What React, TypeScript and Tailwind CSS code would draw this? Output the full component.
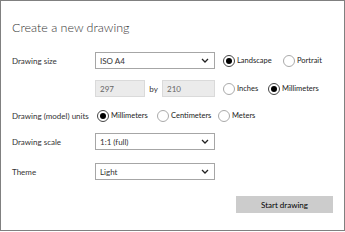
import React from 'react'

const font = { fontFamily: 'Lato, "Noto Sans", sans-serif' }

function Chevron() {
  return (
    <svg width="8" height="5" viewBox="0 0 8 5" className="shrink-0">
      <polyline points="1,1 4,4 7,1" fill="none" stroke="#222" strokeWidth="1.3" />
    </svg>
  )
}

function Select({ value }: { value: string }) {
  return (
    <div className="w-[120px] h-[17px] border border-[#a6a6a6] bg-white flex items-center justify-between pl-[4px] pr-[5px] text-[8px] text-[#333]">
      <span>{value}</span>
      <Chevron />
    </div>
  )
}

// className carries the slot width, so each circle lands where the reference has it
function Radio({ label, checked, className }: { label: string; checked?: boolean; className?: string }) {
  return (
    <div className={'flex items-center gap-[2px] whitespace-nowrap text-[7.5px] text-[#222] ' + (className || '')}>
      <div className={'w-[12px] h-[12px] shrink-0 rounded-full border flex items-center justify-center bg-white ' + (checked ? 'border-[#444]' : 'border-[#aaa]')}>
        {checked && <div className="w-[6px] h-[6px] rounded-full bg-black" />}
      </div>
      <span>{label}</span>
    </div>
  )
}

function Label({ text }: { text: string }) {
  return <div className="w-[83px] shrink-0 text-[8px] text-[#333]">{text}</div>
}

export default function App() {
  return (
    <div style={font} className="w-[345px] h-[231px] border border-[#808080] bg-white pl-[11px] pr-[11px] flex flex-col">
      <h1 className="mt-[17px] h-[20px] leading-[20px] text-[12.5px] font-light text-[#333]">Create a new drawing</h1>

      {/* Drawing size */}
      <div className="mt-[14px] h-[17px] flex items-center">
        <Label text="Drawing size" />
        <Select value="ISO A4" />
        <div className="ml-[8px] flex items-center">
          <Radio label="Landscape" checked className="w-[60px]" />
          <Radio label="Portrait" />
        </div>
      </div>

      <div className="mt-[11px] h-[17px] flex items-center">
        <div className="w-[83px] shrink-0" />
        <div className="w-[50px] h-[17px] border border-[#dadada] bg-[#ebebeb] pl-[4px] flex items-center text-[8px] text-[#666]">297</div>
        <span className="w-[17px] text-center text-[8px] text-[#333]">by</span>
        <div className="w-[53px] h-[17px] border border-[#dadada] bg-[#ebebeb] pl-[4px] flex items-center text-[8px] text-[#666]">210</div>
        <div className="ml-[8px] flex items-center">
          <Radio label="Inches" className="w-[45px]" />
          <Radio label="Millimeters" checked />
        </div>
      </div>

      {/* Units */}
      <div className="mt-[10px] h-[17px] flex items-center">
        <Label text="Drawing (model) units" />
        <div className="ml-[2px] flex items-center">
          <Radio label="Millimeters" checked className="w-[60px]" />
          <Radio label="Centimeters" className="w-[61px]" />
          <Radio label="Meters" />
        </div>
      </div>

      <div className="mt-[9px] h-[17px] flex items-center">
        <Label text="Drawing scale" />
        <Select value="1:1 (full)" />
      </div>

      <div className="mt-[13px] h-[17px] flex items-center">
        <Label text="Theme" />
        <Select value="Light" />
      </div>

      <div className="mt-[16px] flex justify-end">
        <button className="w-[97px] h-[17px] bg-[#cccccc] text-[8px] text-black">Start drawing</button>
      </div>
    </div>
  )
}
